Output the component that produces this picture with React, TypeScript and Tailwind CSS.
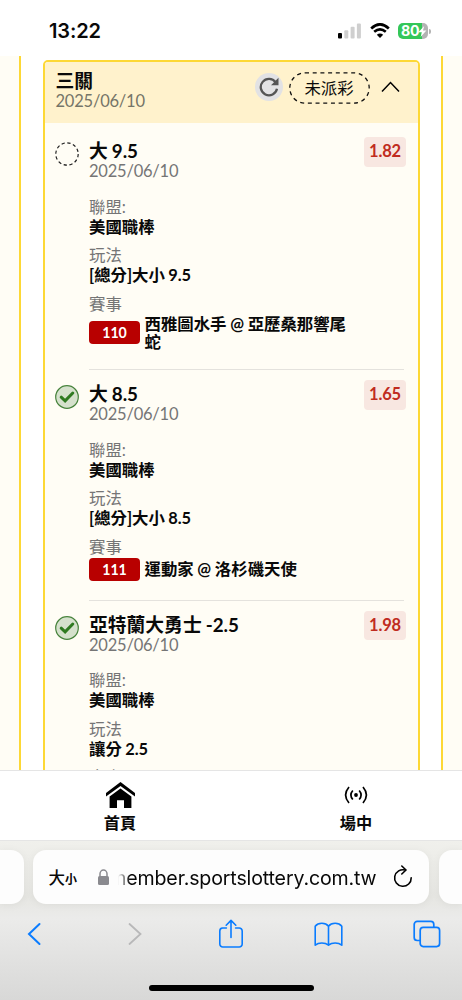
import React from "react";

type Leg = {
  title: string;
  odds: string;
  play: string;
  code?: string;
  match?: string;
  won: boolean;
};

const legs: Leg[] = [
  { title: "大 9.5", odds: "1.82", play: "[總分]大小 9.5", code: "110", match: "西雅圖水手 @ 亞歷桑那響尾蛇", won: false },
  { title: "大 8.5", odds: "1.65", play: "[總分]大小 8.5", code: "111", match: "運動家 @ 洛杉磯天使", won: true },
  { title: "亞特蘭大勇士 -2.5", odds: "1.98", play: "讓分 2.5", won: true },
];

function StatusBar() {
  return (
    <header className="flex h-14 shrink-0 items-start bg-white pl-[49px] pr-[31px] pt-[18px]">
      <span className="flex-1 font-['Inter'] text-[20px] font-semibold leading-[26px] tracking-[-0.1px]">13:22</span>
      <div className="flex h-[26px] items-center">
        <svg width="24" height="16" viewBox="0 0 24 16">
          <rect x="0" y="10" width="4" height="5.5" rx="1" fill="#000" />
          <rect x="6.3" y="7.2" width="4" height="8.3" rx="1" fill="#cfcfcf" />
          <rect x="12.6" y="3.8" width="4" height="11.7" rx="1" fill="#cfcfcf" />
          <rect x="18.9" y="0.6" width="4" height="14.9" rx="1" fill="#cfcfcf" />
        </svg>
        <svg className="ml-2" width="20" height="16" viewBox="0 0 20 16">
          <path d="M1.2 5.4 Q10 -2.6 18.8 5.4" fill="none" stroke="#000" strokeWidth="2.7" />
          <path d="M4.2 8.8 Q10 3.8 15.8 8.8" fill="none" stroke="#000" strokeWidth="2.6" />
          <path d="M10 15 L6.8 11.7 Q10 9.2 13.2 11.7 Z" fill="#000" />
        </svg>
        <div className="relative ml-2 mr-px flex h-[16px] w-[30px] items-center overflow-hidden rounded-[5px] bg-[linear-gradient(90deg,#34c759_80%,#b3b3b3_80%)]">
          <span className="pl-[3px] font-['Inter'] text-[14.2px] font-bold leading-4 tracking-[-0.3px] text-white">80</span>
          <svg className="absolute left-[20px] top-[2.5px]" width="9" height="11" viewBox="0 0 9 11">
            <path d="M6.2 0 L0.4 6.3 H3.8 L2.6 11 L8.4 4.5 H5 Z" fill="#fff" />
          </svg>
        </div>
        <span className="h-[5px] w-[2px] rounded-r-full bg-[#b3b3b3]" />
      </div>
    </header>
  );
}

function StatusIcon({ won }: { won: boolean }) {
  return won ? (
    <svg width="24" height="24" viewBox="0 0 24 24" fill="none">
      <circle cx="12" cy="12" r="11.3" fill="#d5e1cc" stroke="#47833c" strokeWidth="1.2" />
      <path d="M6.2 12.2 L10.1 15.9 L17.8 8" stroke="#2f7a20" strokeWidth="3" strokeLinecap="round" />
    </svg>
  ) : (
    <svg width="24" height="24" viewBox="0 0 24 24" fill="none">
      <circle cx="12" cy="12" r="11.2" stroke="#222" strokeWidth="1.2" strokeDasharray="3.3 2.56" />
    </svg>
  );
}

function Field({ label, value }: { label: string; value: string }) {
  return (
    <div className="mb-[8.5px] leading-5">
      <div className="text-[#757575]">{label}</div>
      <div className="font-bold [word-spacing:-0.6px]">{value}</div>
    </div>
  );
}

function LegRow({ leg, last }: { leg: Leg; last: boolean }) {
  return (
    <section className="flex pl-[10px] pr-[12px] text-[16.4px]">
      <div className="w-[34.5px] shrink-0 pt-[15px]">
        <StatusIcon won={leg.won} />
      </div>
      <div className="min-w-0 flex-1">
        <div className="flex justify-between">
          <div className="pt-[14px]">
            <h2 className="text-[18.8px] font-bold leading-5 [word-spacing:-0.6px]">{leg.title}</h2>
            <div className="text-[16.5px] leading-5 tracking-[-0.22px] text-[#757575]">2025/06/10</div>
          </div>
          <div className="mt-[10px] flex h-[29.5px] w-[42px] items-center justify-center rounded-[4px] bg-[#f8e7e1] pl-px text-[16.5px] font-bold tracking-[-0.2px] text-[#c02b20]">
            {leg.odds}
          </div>
        </div>
        <div className="pt-[15.5px]">
          <Field label="聯盟:" value="美國職棒" />
          <Field label="玩法" value={leg.play} />
          <div className="leading-5 text-[#757575]">賽事</div>
          {leg.match && (
            <div className="mt-px flex items-center">
              <span className="flex h-[23.5px] w-[51px] shrink-0 items-center justify-center rounded-[4px] bg-[#b80000] text-[14.2px] font-bold text-white">
                {leg.code}
              </span>
              <span className="ml-[4.5px] w-[208px] font-bold leading-[18px] [word-spacing:-0.3px]">{leg.match}</span>
            </div>
          )}
        </div>
        {!last && <div className="mr-[2px] mt-[18.5px] h-px bg-[#e4e2dd]" />}
      </div>
    </section>
  );
}

function Ticket() {
  return (
    <article className="mt-1 h-[900px] w-[377px] shrink-0 overflow-hidden rounded-t-[5px] border-2 border-[#fdd835] bg-[#fffdf5]">
      <header className="flex h-[60.5px] items-center bg-[#fff2cc] pl-[11px] pr-[17px]">
        <div className="flex-1 pb-[2px]">
          <h1 className="text-[18.8px] font-bold leading-5">三關</h1>
          <div className="text-[16.5px] leading-5 tracking-[-0.22px] text-[#757568]">2025/06/10</div>
        </div>
        <div className="mb-[8px] flex items-center">
          <span className="-mt-[2px] flex size-7 items-center justify-center rounded-full bg-[#e2e2e4]">
            <svg width="20" height="20" viewBox="0 0 20 20" fill="none">
              <path d="M16.6 5.3 A8.2 8.2 0 1 0 18 11.8" stroke="#555" strokeWidth="2.3" />
              <path d="M19.5 0.8 V8.3 H12 Z" fill="#555" />
            </svg>
          </span>
          <span className="relative ml-[6px] flex h-8 w-[81px] items-center justify-center text-[16.4px]">
            <svg className="absolute inset-0" width="81" height="32" viewBox="0 0 81 32" fill="none">
              <rect x="0.8" y="0.8" width="79.4" height="30.4" rx="15.2" stroke="#111" strokeWidth="1.3" strokeDasharray="4 3.7" />
            </svg>
            未派彩
          </span>
          <svg className="-mt-[3px] ml-[11px] mr-px" width="19" height="12" viewBox="0 0 19 12" fill="none">
            <path d="M1 10.5 L9.5 1.5 L18 10.5" stroke="#000" strokeWidth="1.5" />
          </svg>
        </div>
      </header>
      <div className="pt-[4.5px]">
        {legs.map((leg, i) => (
          <LegRow key={leg.title} leg={leg} last={i === legs.length - 1} />
        ))}
      </div>
    </article>
  );
}

function BottomTabs() {
  return (
    <nav className="flex h-[71px] shrink-0 border-y border-[#e5e5e5] bg-white text-[16.2px] font-bold">
      <a className="flex w-[240px] shrink-0 flex-col items-center pt-[10px]">
        <svg width="29" height="28" viewBox="0 0 29 28">
          <path d="M14.5 1 L0 12 V15.5 L14.5 5 L29 15.5 V12 Z" fill="#000" />
          <path d="M14.5 7.6 L3.6 15.6 V27 H11 V19.3 H18 V27 H25.4 V15.6 Z" fill="#000" />
        </svg>
        <span className="mt-[4px] leading-5">首頁</span>
      </a>
      <a className="flex w-[232px] shrink-0 flex-col items-center pt-[10px]">
        <svg width="24" height="28" viewBox="0 0 24 28" fill="none" stroke="#000" strokeWidth="1.7">
          <circle cx="12" cy="14" r="1.9" fill="#000" stroke="none" />
          <path d="M8.8 9.5 Q5 14 8.8 18.5 M15.2 9.5 Q19 14 15.2 18.5 M5 6 Q-1.8 14 5 22 M19 6 Q25.8 14 19 22" />
        </svg>
        <span className="mt-[4px] leading-5">場中</span>
      </a>
    </nav>
  );
}

function BrowserBar() {
  return (
    <footer className="flex h-[159px] shrink-0 flex-col bg-[linear-gradient(180deg,#f0f0ec_0%,#e6e6e2_35%,#ebebea_49%,#e3e3e2_70%,#d8d8d7_100%)]">
      <div className="flex pt-[9px]">
        <div className="h-[54px] w-[23.5px] rounded-r-[13px] bg-[#fdfdfd] shadow-[0_1px_8px_rgba(0,0,0,0.05)]" />
        <div className="ml-[9.5px] flex h-[54px] w-[396px] items-center rounded-[13px] bg-[#fdfdfd] pl-[15.5px] pr-[16px] shadow-[0_1px_8px_rgba(0,0,0,0.05)]">
          <span className="flex w-[48px] items-baseline whitespace-nowrap pt-[3px] leading-6">
            <span className="text-[16.5px] font-medium">大</span>
            <span className="text-[12px] font-bold">小</span>
          </span>
          <svg width="13" height="17" viewBox="0 0 13 17" fill="none">
            <rect x="1" y="7" width="11" height="9" rx="1.5" fill="#8a8a8f" />
            <path d="M3 7.5 V4.8 A3.5 3.7 0 0 1 10 4.8 V7.5" stroke="#8a8a8f" strokeWidth="1.5" />
          </svg>
          <div className="ml-[8px] flex w-[259px] justify-end overflow-hidden whitespace-nowrap pt-[2px] font-['Inter'] text-[19.6px] leading-7 tracking-[-0.15px] [mask-image:linear-gradient(90deg,transparent,#000_12px)]">
            member.sportslottery.com.tw
          </div>
          <svg className="ml-auto" width="20" height="24" viewBox="0 0 20 24" fill="none" stroke="#000" strokeWidth="1.6">
            <path d="M12.4 5.1 A8.3 8.3 0 1 0 18.2 12.7" strokeLinecap="round" />
            <path d="M8.8 1 L13 5 L8.8 9" strokeLinecap="round" strokeLinejoin="round" />
          </svg>
        </div>
        <div className="ml-[9.5px] h-[54px] flex-1 rounded-l-[13px] bg-[#fdfdfd] shadow-[0_1px_8px_rgba(0,0,0,0.05)]" />
      </div>
      <div className="flex h-[60px] items-center pl-[27px] text-[#0a7cff]">
        <svg width="14" height="24" viewBox="0 0 14 24" fill="none" stroke="currentColor" strokeWidth="2" strokeLinecap="round">
          <path d="M12.5 2 L2 12 L12.5 22" />
        </svg>
        <svg className="ml-[87px] text-[#b8b8b9]" width="14" height="24" viewBox="0 0 14 24" fill="none" stroke="currentColor" strokeWidth="1.8" strokeLinecap="round">
          <path d="M1.5 2 L12.5 12 L1.5 22" />
        </svg>
        <svg className="ml-[76px]" width="26" height="30" viewBox="0 0 26 30" fill="none" stroke="currentColor" strokeWidth="1.6" strokeLinecap="round" strokeLinejoin="round">
          <path d="M8.4 9 H4.5 A3 3 0 0 0 1.8 12 V25 A3 3 0 0 0 4.8 28 H21.2 A3 3 0 0 0 24.2 25 V12 A3 3 0 0 0 21.2 9 H17.6" />
          <path d="M13 18.5 V1.5 M8.2 6.2 L13 1.4 L17.8 6.2" />
        </svg>
        <svg className="ml-[70px]" width="29" height="25" viewBox="0 0 29 25" fill="none" stroke="currentColor" strokeWidth="1.6" strokeLinejoin="round">
          <path d="M14.5 4.2 C11.5 .2 4.2 .2 1.2 4.2 V23.2 C4.7 20.3 11 20.3 14.5 23.2 C18 20.3 24.3 20.3 27.8 23.2 V4.2 C24.8 .2 17.5 .2 14.5 4.2 V23.2" />
        </svg>
        <svg className="ml-[70px]" width="28" height="28" viewBox="0 0 28 28" fill="none" stroke="currentColor" strokeWidth="1.7">
          <path d="M7 20.5 H4.2 A3 3 0 0 1 1.2 17.5 V4.4 A3 3 0 0 1 4.2 1.4 H17.8 A3 3 0 0 1 20.8 4.4 V7.3" />
          <rect x="7.2" y="7.4" width="19.4" height="19.2" rx="3" />
        </svg>
      </div>
      <div className="mx-auto mt-[20.5px] h-[6px] w-[165px] rounded-full bg-black" />
    </footer>
  );
}

export default function App() {
  return (
    <div className="flex h-[1000px] w-[462px] flex-col overflow-hidden bg-white font-['Lato','Noto_Sans_CJK_TC',sans-serif] text-[#090909]">
      <StatusBar />
      <main className="flex h-[714px] shrink-0 justify-between overflow-hidden">
        <div className="w-[21px] border-r-2 border-[#fdd835] bg-[#fffdf5]" />
        <Ticket />
        <div className="w-[21px] border-l-2 border-[#fdd835] bg-[#fffdf5]" />
      </main>
      <BottomTabs />
      <BrowserBar />
    </div>
  );
}
